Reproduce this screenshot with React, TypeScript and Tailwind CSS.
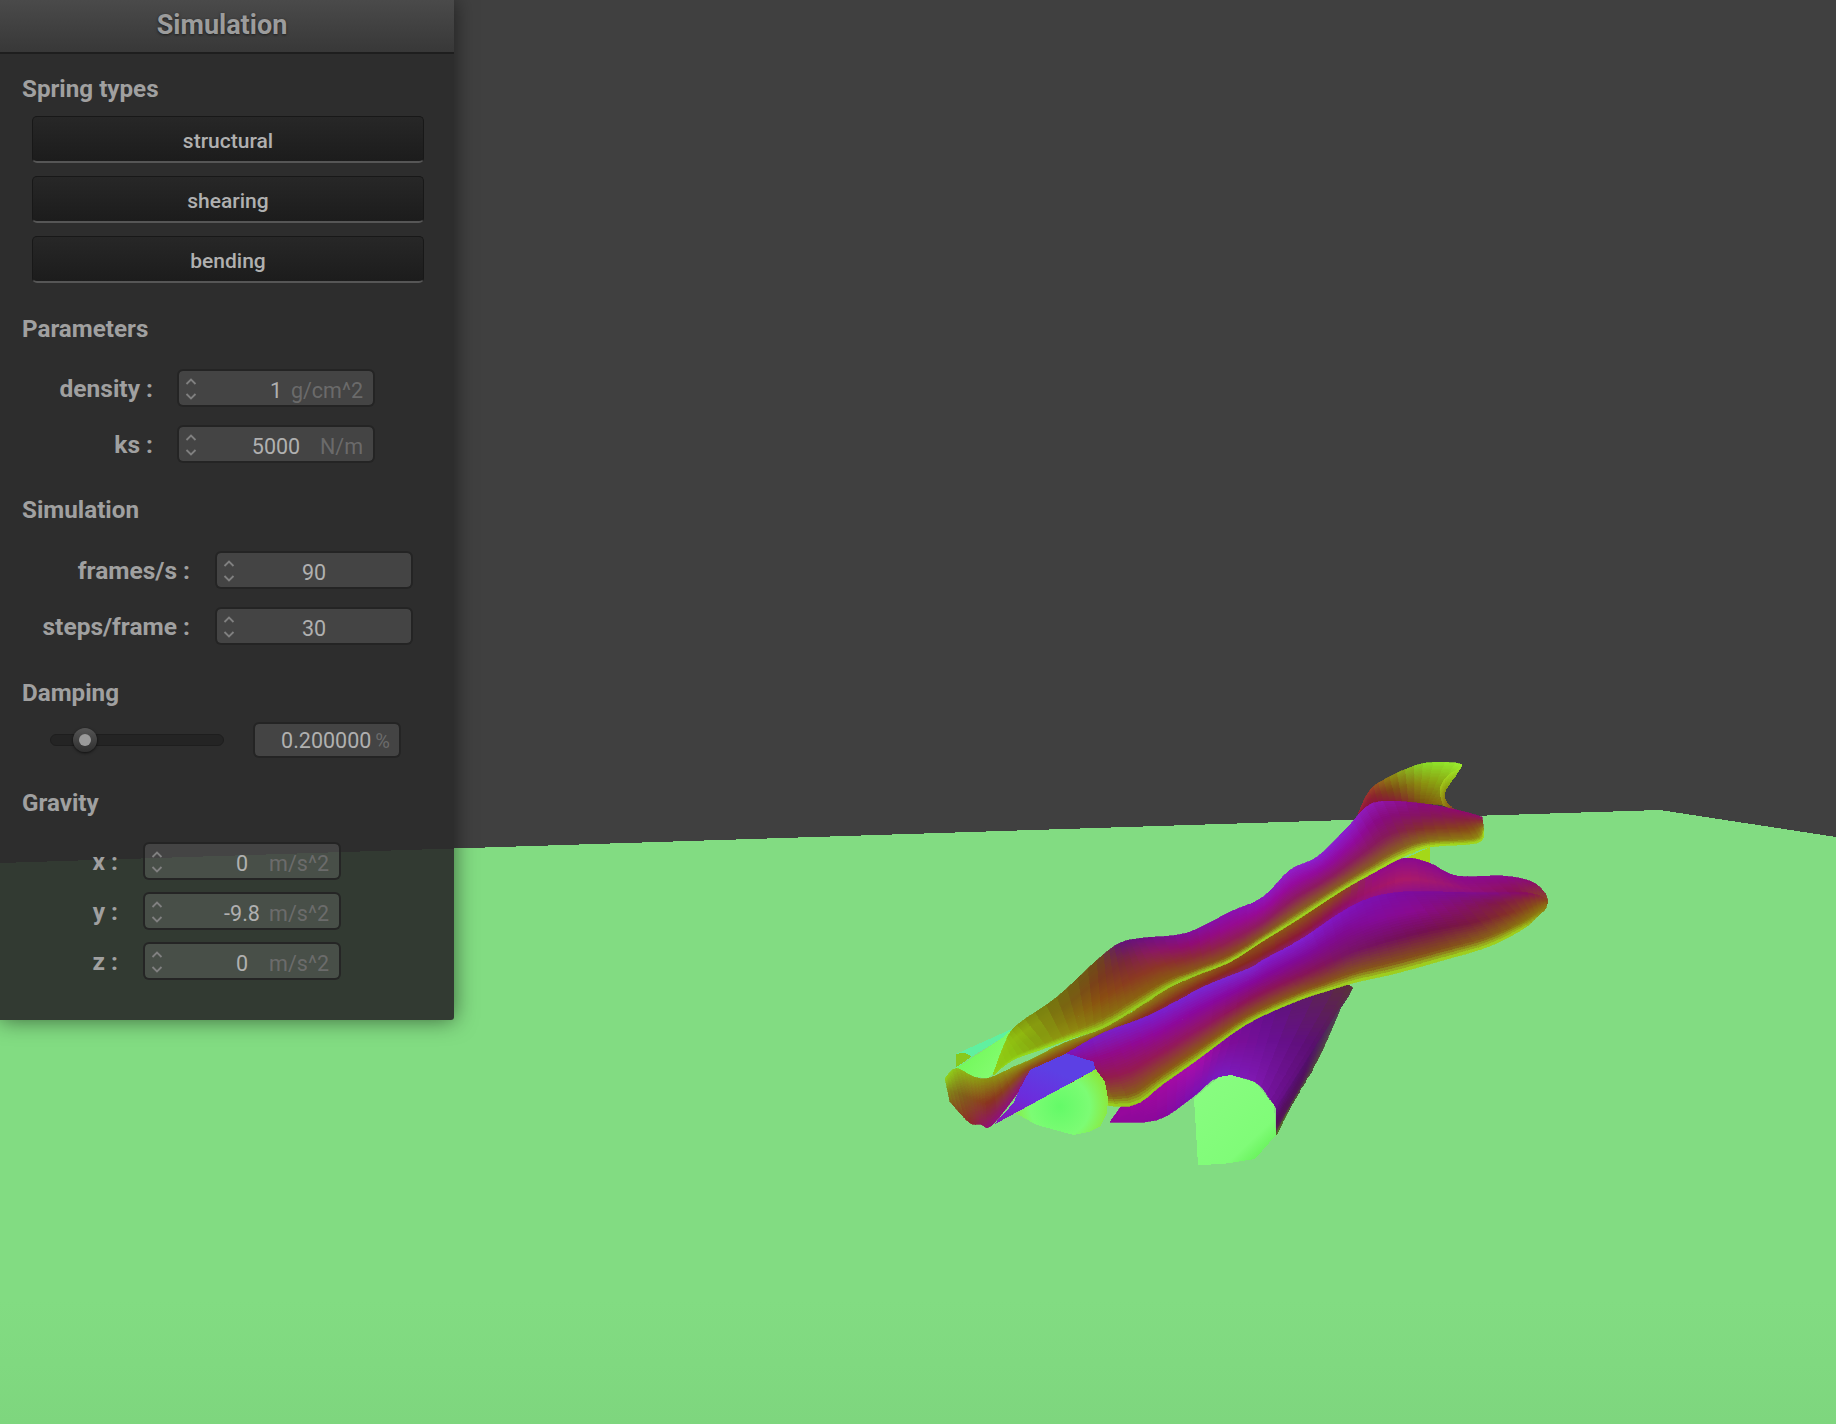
const font = { fontFamily: 'Roboto, "Liberation Sans", sans-serif' };

// --- cloth mesh: each row is one cross-section of a strip, top point, bottom point, colours top to bottom
type Row = [number, number, number, number, string];

const hex = (c: string) => [1, 3, 5].map((i) => parseInt(c.slice(i, i + 2), 16));

const mix = (a: number[], b: number[], t: number) => a.map((v, i) => v + (b[i] - v) * t);

const rampAt = (ramp: number[][], v: number) => {
  const p = v * (ramp.length - 1);
  const i = Math.min(Math.floor(p), ramp.length - 2);
  return mix(ramp[i], ramp[i + 1], p - i);
};

const catmull = (p0: number, p1: number, p2: number, p3: number, t: number) =>
  0.5 * (2 * p1 + (p2 - p0) * t + (2 * p0 - 5 * p1 + 4 * p2 - p3) * t * t + (3 * p1 - p0 - 3 * p2 + p3) * t * t * t);

// rows read from zoomed crops, 3x with the crop origin given
const from = (ox: number, oy: number, rows: Row[]): Row[] =>
  rows.map(([a, b, c, d, e]) => [ox + a / 3, oy + b / 3, ox + c / 3, oy + d / 3, e]);

// tubes keep the bright lime to a thin rim along the lower edge
const tubeShade = (v: number) => (v < 0.87 ? (v * 0.75) / 0.87 : 0.75 + ((v - 0.87) * 0.25) / 0.13);

function Mesh({ rows, along = 4, across = 30, tube = false }: { rows: Row[]; along?: number; across?: number; tube?: boolean }) {
  const cells = [];
  const ramps = rows.map((r) => r[4].split(' ').map(hex));
  const point = (i: number, t: number, col: number) => {
    const r = (k: number) => rows[Math.max(0, Math.min(rows.length - 1, k))][col] as number;
    return catmull(r(i - 1), r(i), r(i + 1), r(i + 2), t);
  };
  const at = (i: number, t: number, v: number) => [
    point(i, t, 0) + (point(i, t, 2) - point(i, t, 0)) * v,
    point(i, t, 1) + (point(i, t, 3) - point(i, t, 1)) * v,
  ];
  for (let i = 0; i < rows.length - 1; i++) {
    for (let a = 0; a < along; a++) {
      const t0 = a / along;
      const t1 = (a + 1) / along;
      for (let b = 0; b < across; b++) {
        const v0 = b / across;
        const v1 = (b + 1) / across;
        const mid = (v0 + v1) / 2;
        const v = tube ? tubeShade(mid) : mid;
        const c = mix(rampAt(ramps[i], v), rampAt(ramps[i + 1], v), (t0 + t1) / 2);
        const fill = `rgb(${c.map((n) => Math.round(n)).join(',')})`;
        const pts = [at(i, t0, v0), at(i, t1, v0), at(i, t1, v1), at(i, t0, v1)];
        cells.push(
          <polygon key={`${i}-${a}-${b}`} points={pts.map((p) => p.map((n) => n.toFixed(1)).join(',')).join(' ')} fill={fill} stroke={fill} strokeWidth="0.7" />,
        );
      }
    }
  }
  return <g>{cells}</g>;
}

const flap = from(1230, 750, [
  [385, 192, 385, 192, '#a01a40 #a01a40 #901a38'],
  [420, 120, 430, 165, '#9c3a28 #8c2030 #8a1040'],
  [480, 80, 500, 158, '#8e8212 #7c4a14 #861a38'],
  [580, 40, 570, 160, '#88dc28 #8c9010 #7a5010'],
  [695, 43, 610, 162, '#9cf030 #88b412 #846010'],
  [650, 80, 635, 165, '#a0d41e #8c9810 #846810'],
  [630, 120, 660, 175, '#a0c018 #908410 #88601a'],
  [640, 165, 680, 182, '#948414 #8a5c14 #881a50'],
]);

const strand: Row[] = [
  [1110, 1122, 1110, 1122, '#90089a #90089a #90089a'],
  [1157, 1060, 1157, 1120, '#980ca0 #a00aa0 #8a089a'],
  [1200, 1030, 1193, 1097, '#8a14b0 #a60eac #7a10b0'],
  [1240, 1010, 1219, 1077, '#7010a0 #800c98 #7a1cc0'],
  [1280, 1000, 1255, 1082, '#5e1080 #6c1096 #8018b0'],
  [1349, 985, 1274, 1105, '#5c3038 #5a0f70 #6c1090'],
  [1341, 1007, 1276, 1110, '#504050 #501068 #621080'],
  [1330, 1033, 1276, 1120, '#50484a #521060 #561060'],
  [1320, 1055, 1276, 1125, '#524840 #501858 #561058'],
  [1309, 1075, 1276, 1130, '#50483e #502458 #582050'],
  [1292, 1103, 1276, 1133, '#4e5630 #50403a #583e40'],
  [1276, 1135, 1276, 1135, '#587028 #587028 #587028'],
];

const upperTube: Row[] = [
  [993, 1075, 993, 1075, '#90d018 #90d018 #90d018 #90d018 #90d018'],
  [1005, 1043, 1013, 1060, '#90cc14 #90c412 #8cc412 #8cc812 #94d81a'],
  [1017, 1025, 1040, 1050, '#84a010 #90b810 #88ac10 #88a810 #98e020'],
  [1057, 997, 1073, 1038, '#746e10 #7a6a10 #85780e #908c10 #98e020'],
  [1097, 960, 1103, 1028, '#6e4a18 #7a3c1a #8a4e10 #8a7410 #98d820'],
  [1120, 943, 1137, 1008, '#621478 #7a2838 #8a3a20 #8a6410 #98d820'],
  [1143, 938, 1170, 987, '#6c1080 #8a1a60 #8c3428 #885c10 #98d820'],
  [1187, 933, 1197, 975, '#80109a #900c70 #8c2a38 #885818 #98d820'],
  [1230, 912, 1230, 962, '#8a10b0 #960a90 #901c58 #885018 #a0e020'],
  [1263, 897, 1263, 941, '#8c18c0 #980a98 #8e1c60 #865820 #a0e020'],
  [1290, 870, 1297, 920, '#9020c8 #960aa0 #8c1a60 #886020 #a0e020'],
  [1317, 857, 1343, 890, '#8a20d0 #920aa0 #8c1a60 #886020 #a0e020'],
  [1347, 828, 1373, 873, '#8a20d0 #920aa0 #8a1a60 #886020 #a4e420'],
  [1373, 803, 1403, 857, '#9018b0 #880a80 #851a58 #886020 #a8e820'],
  [1417, 803, 1430, 847, '#8a0a80 #861460 #84302c #887018 #a8e820'],
  [1457, 810, 1477, 843, '#900870 #882040 #884818 #908010 #a0e020'],
  [1482, 817, 1484, 832, '#900870 #8a3030 #886818 #98b018 #a0e020'],
];

const ridge: Row[] = [
  ...from(930, 900, [
    [45, 535, 60, 605, '#90d81c #84901a #806a14'],
    [78, 505, 118, 668, '#90c418 #80601a #8e2a28'],
    [130, 530, 150, 672, '#8ea414 #8a4a1c #901c50'],
    [175, 535, 185, 677, '#8c9010 #8a3020 #90107a'],
    [240, 505, 270, 570, '#90a012 #8a5018 #8c1080'],
    [300, 480, 300, 530, '#8e9612 #8a4a18 #8a1088'],
    [400, 430, 410, 490, '#8e9212 #8a4018 #8a1090'],
    [520, 385, 520, 430, '#8c8a12 #88381c #8a10a0'],
    [620, 325, 660, 375, '#8c8212 #88301e #8a10a0'],
    [720, 262, 820, 292, '#8c7a12 #882c20 #8a10b0'],
    [800, 225, 880, 258, '#8c7012 #88281f #8a10b0'],
  ]),
  [1250, 945, 1250, 978, '#8c6412 #862820 #8a14c0'],
  ...from(1230, 750, [
    [200, 510, 230, 590, '#8c5a14 #8c1838 #8a1cc8'],
    [340, 420, 330, 520, '#8c4a18 #8e1060 #8a10b0'],
    [430, 370, 420, 475, '#960c88 #9e1468 #8a0ca0'],
    [520, 325, 520, 455, '#8a0a90 #ac1a68 #7e0aa0'],
    [600, 340, 640, 455, '#8a0a90 #a01870 #7a0a98'],
    [680, 378, 770, 460, '#8a0a90 #94107a #7a0a98'],
    [820, 378, 880, 450, '#8a0a90 #8c1060 #801048'],
    [905, 395, 920, 460, '#8a0a70 #8a2a40 #884818'],
    [945, 430, 945, 470, '#8a3040 #8a4a20 #885818'],
    [953, 458, 945, 472, '#8a6014 #8a6014 #8a6014'],
  ]),
];

const mainTube: Row[] = [
  [1067, 1053, 1073, 1100, '#7a14c0 #900a80 #8c2040 #888014 #a0e020'],
  [1103, 1033, 1130, 1106, '#7a20c8 #920a88 #941a50 #866018 #98d81c'],
  [1150, 1015, 1163, 1084, '#7820d0 #90089a #941858 #8a5a14 #98d41c'],
  [1203, 987, 1197, 1060, '#7828d4 #8a08a0 #921860 #8a5c14 #98d81c'],
  [1250, 968, 1247, 1024, '#7c28d0 #86089c #8c1458 #885818 #98d81c'],
  [1263, 960, 1297, 1001, '#8020d0 #84089a #8a1458 #885a18 #9cdc1c'],
  [1303, 938, 1327, 991, '#8020d0 #800a98 #841458 #885418 #a0e020'],
  [1340, 913, 1357, 982, '#8014c0 #800a90 #781464 #865818 #a0e020'],
  [1370, 898, 1397, 973, '#7c10b0 #840a98 #74105e #865418 #a0e020'],
  [1403, 892, 1447, 959, '#7c0ca0 #8a0a90 #741050 #845018 #a0e020'],
  [1443, 892, 1490, 946, '#7c0c98 #84106c #7a1840 #886018 #a0e020'],
  [1487, 893, 1523, 929, '#800c88 #801848 #843028 #8a7010 #a0d81c'],
  [1528, 893, 1537, 917, '#8a0a60 #883030 #885018 #8c7810 #94a014'],
  [1546, 899, 1546, 908, '#8a4020 #8a5018 #8c6a14 #8c7810 #8c7810'],
];

const capFront = '258,640 497,508 525,545 535,600 530,640 510,680 480,695 430,705 375,690 320,675';
const backBits = '78,505 215,415 250,385 222,436 215,490 175,535 130,530';

function Scene() {
  return (
    <svg className="absolute inset-0" width="1836" height="1424" viewBox="0 0 1836 1424" shapeRendering="crispEdges">
      <defs>
        <linearGradient id="ground" x1="0" y1="1300" x2="0" y2="1424" gradientUnits="userSpaceOnUse">
          <stop offset="0" stopColor="#82dc82" />
          <stop offset="1" stopColor="#7ed67e" />
        </linearGradient>
        <linearGradient id="blue" x1="300" y1="480" x2="220" y2="660" gradientUnits="userSpaceOnUse">
          <stop offset="0" stopColor="#5c40e4" />
          <stop offset="0.55" stopColor="#6c2cdc" />
          <stop offset="1" stopColor="#8418b8" />
        </linearGradient>
        <radialGradient id="capFront" cx="390" cy="620" r="150" gradientUnits="userSpaceOnUse">
          <stop offset="0" stopColor="#64fa68" />
          <stop offset="0.6" stopColor="#7cfc74" />
          <stop offset="1" stopColor="#8ce83c" />
        </radialGradient>
        <linearGradient id="capBack" x1="1200" y1="1090" x2="1270" y2="1165" gradientUnits="userSpaceOnUse">
          <stop offset="0" stopColor="#88fc80" />
          <stop offset="0.7" stopColor="#80fc78" />
          <stop offset="1" stopColor="#58ec48" />
        </linearGradient>
        <linearGradient id="backBits" x1="100" y1="440" x2="200" y2="520" gradientUnits="userSpaceOnUse">
          <stop offset="0" stopColor="#70f858" />
          <stop offset="1" stopColor="#84fc70" />
        </linearGradient>
      </defs>

      <polygon points="0,863 1660,810 1836,837 1836,1424 0,1424" fill="url(#ground)" />

      <polygon points="1373,873 1430,847 1430,872 1403,860" fill="#a4d818" />
      <Mesh rows={flap} />
      <Mesh rows={strand} />
      <polygon points="1194,1098 1219,1077 1231,1075 1255,1082 1274,1105 1276,1135 1255,1159 1223,1164 1198,1165" fill="url(#capBack)" />

      <g transform="translate(930 900) scale(0.3333)">
        <polygon points="78,462 250,385 215,415 125,470 78,505" fill="#60f0a0" />
        <polygon points="78,462 105,458 125,470 78,502" fill="#88c81c" />
        <polygon points={backBits} fill="url(#backBits)" />
      </g>

      <Mesh rows={ridge} />
      <Mesh rows={upperTube} tube />
      <Mesh rows={mainTube} tube />

      <g transform="translate(930 900) scale(0.3333)">
        <polygon points="410,460 490,485 497,508 190,675 250,610 270,565 300,510" fill="url(#blue)" />
        <polygon points={capFront} fill="url(#capFront)" />
      </g>
    </svg>
  );
}

// --- panel
function Heading({ children, className }: { children: string; className: string }) {
  return <h2 className={`h-7 pl-[22px] text-[24.200px] leading-7 font-bold text-[#a0a0a0] ${className}`}>{children}</h2>;
}

function SpringButton({ label }: { label: string }) {
  return (
    <button className="h-[47px] w-[392px] rounded-[5px] border border-[#181818] border-b-2 border-b-[#565656] bg-gradient-to-b from-[#272727] to-[#1c1c1c] pt-[5px] text-[21px] font-medium text-[#b0b0b0]">
      {label}
    </button>
  );
}

function Spinner() {
  return (
    <svg width="12" height="26" viewBox="0 0 12 26" fill="none" stroke="#808080" strokeWidth="1.8" className="absolute left-[6px] top-[5px]">
      <path d="M1.500 8 6 3.500 10.500 8" />
      <path d="M1.500 18 6 22.500 10.500 18" />
    </svg>
  );
}

function NumberField({ value, unit }: { value: string; unit?: string }) {
  return (
    <div className="relative flex h-[38px] w-[198px] items-center justify-center rounded-[6px] border-2 border-[#242424]/90 bg-[#ffffff]/11 bg-clip-padding pt-[6px] text-[21.500px] text-[#b0b0b0]">
      <Spinner />
      <span>{value}</span>
      {unit && <span className="absolute right-[10px] text-[#707070]/90">{unit}</span>}
    </div>
  );
}

function FieldRow({ label, labelWidth, value, unit }: { label: string; labelWidth: string; value: string; unit?: string }) {
  return (
    <div className="flex items-center">
      <span className={`${labelWidth} shrink-0 pt-[2px] text-right text-[24.500px] leading-9 font-bold text-[#a0a0a0]`}>{label}</span>
      <NumberField value={value} unit={unit} />
    </div>
  );
}

export default function App() {
  return (
    <div className="relative h-[1424px] w-[1836px] overflow-hidden bg-[#404040]" style={font}>
      <Scene />
      <div className="relative flex w-[454px] flex-col rounded-br-[3px] bg-[#2b2b2b]/92 pb-10 shadow-[0_0_22px_rgba(0,0,0,0.55)]">
        <div className="flex h-[54px] items-center justify-center border-b-2 border-[#1e1e1e] bg-gradient-to-b from-[#4a4a4a] to-[#383838] pr-[10px] pb-[2px] text-[27px] font-bold text-[#9c9c9c] [text-shadow:0_1px_3px_rgba(0,0,0,0.6)]">
          Simulation
        </div>

        <Heading className="mt-[21px]">Spring types</Heading>
        <div className="mt-[13px] flex flex-col gap-[13px] pl-8">
          <SpringButton label="structural" />
          <SpringButton label="shearing" />
          <SpringButton label="bending" />
        </div>

        <Heading className="mt-8">Parameters</Heading>
        <div className="mt-[26px] flex flex-col gap-[18px]">
          <FieldRow label="density :" labelWidth="w-[153px] mr-6" value="1" unit="g/cm^2" />
          <FieldRow label="ks :" labelWidth="w-[153px] mr-6" value="5000" unit="N/m" />
        </div>

        <Heading className="mt-[33px]">Simulation</Heading>
        <div className="mt-[27px] flex flex-col gap-[18px]">
          <FieldRow label="frames/s :" labelWidth="w-[190px] mr-[25px]" value="90" />
          <FieldRow label="steps/frame :" labelWidth="w-[190px] mr-[25px]" value="30" />
        </div>

        <Heading className="mt-[34px]">Damping</Heading>
        <div className="mt-[15px] flex items-center pl-[50px]">
          <div className="relative h-3 w-[174px] rounded-full border border-[#1e1e1e] bg-[#242424]">
            <div className="absolute left-[22px] top-[-7px] flex size-6 items-center justify-center rounded-full bg-gradient-to-b from-[#555555] to-[#303030] shadow-[0_1px_3px_rgba(0,0,0,0.7)]">
              <div className="size-3 rounded-full bg-[#9a9a9a]" />
            </div>
          </div>
          <div className="ml-[29px] flex h-9 w-[148px] items-center justify-end gap-1 rounded-[6px] border-2 border-[#242424]/90 bg-[#ffffff]/11 bg-clip-padding pt-[2px] pr-[9px] text-[21.500px] text-[#b0b0b0]">
            <span>0.200000</span>
            <span className="text-[20px] text-[#707070]/90">%</span>
          </div>
        </div>

        <Heading className="mt-[31px]">Gravity</Heading>
        <div className="mt-[25px] flex flex-col gap-3">
          <FieldRow label="x :" labelWidth="w-[118px] mr-[25px]" value="0" unit="m/s^2" />
          <FieldRow label="y :" labelWidth="w-[118px] mr-[25px]" value="-9.8" unit="m/s^2" />
          <FieldRow label="z :" labelWidth="w-[118px] mr-[25px]" value="0" unit="m/s^2" />
        </div>
      </div>
    </div>
  );
}
